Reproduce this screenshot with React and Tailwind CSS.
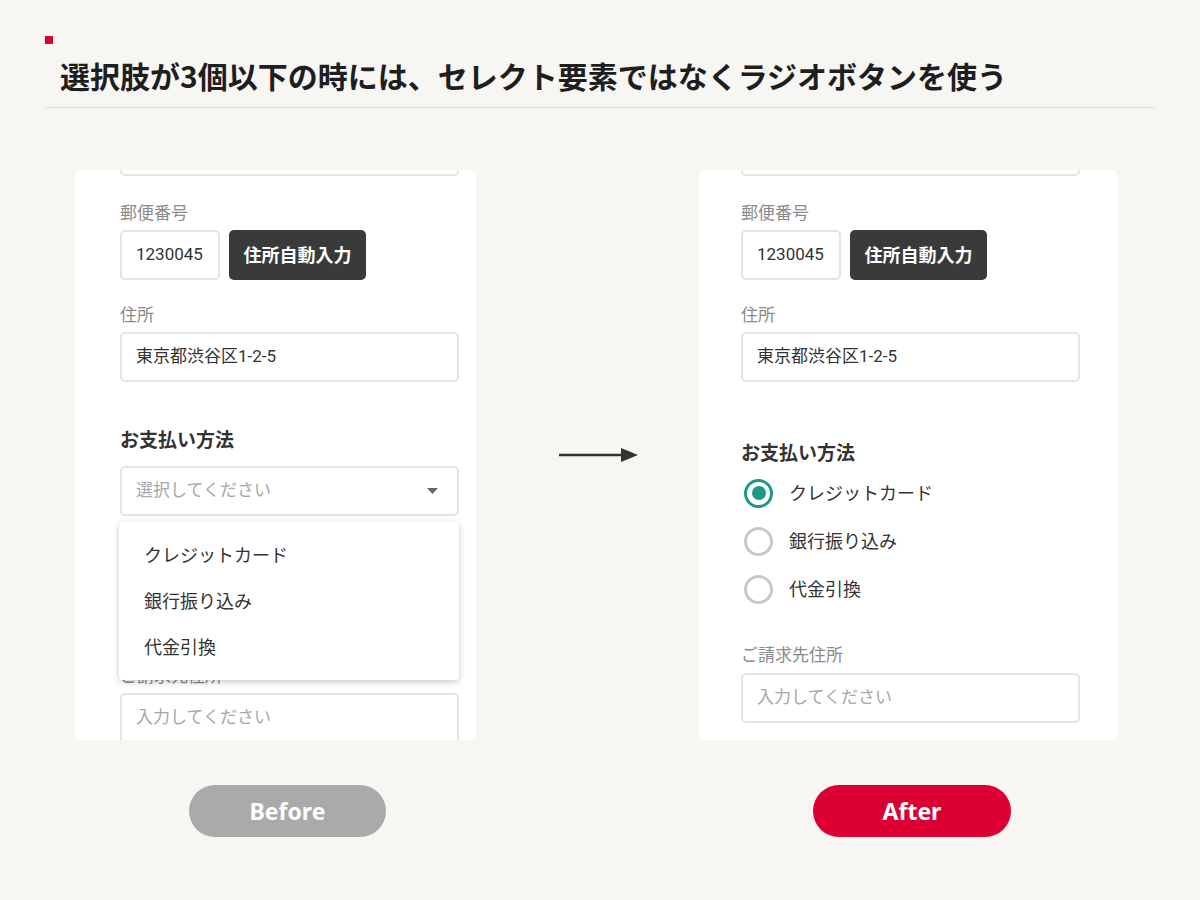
import { useState } from 'react'

const ja = { fontFamily: 'Roboto, "Noto Sans CJK JP", sans-serif' }

function Label({ children, className = '' }) {
  return <p className={`text-[17px] leading-[24px] text-[#8a8a8a] ${className}`}>{children}</p>
}

function Field({ children, placeholder, className = '' }) {
  return (
    <div className={`h-[50px] border-2 border-[#e4e4e4] rounded-[5px] flex items-center px-[14px] text-[17px] ${placeholder ? 'text-[#a8a8a8]' : 'text-[#333]'} ${className}`}>
      {children}
    </div>
  )
}

function Common() {
  return (
    <>
      <div className="h-[6px] border-2 border-t-0 border-[#e4e4e4] rounded-b-[5px]" />
      <Label className="mt-[25px]">郵便番号</Label>
      <div className="flex gap-[9px] mt-[5px]">
        <Field className="w-[100px]">1230045</Field>
        <button className="h-[50px] w-[137px] rounded-[5px] bg-[#3a3a3a] text-white font-bold text-[18px]">住所自動入力</button>
      </div>
      <Label className="mt-[23px]">住所</Label>
      <Field className="mt-[5px]">東京都渋谷区1-2-5</Field>
    </>
  )
}

function Radio({ checked, label, onClick }) {
  return (
    <div className="h-[48px] flex items-center cursor-pointer" onClick={onClick}>
      <span className={`w-[29px] h-[29px] rounded-full border-[3px] flex items-center justify-center ${checked ? 'border-[#1b9886]' : 'border-[#c8c8c8]'}`}>
        {checked && <span className="w-[14px] h-[14px] rounded-full bg-[#1b9886]" />}
      </span>
      <span className="ml-[16px] text-[18px] text-[#333]">{label}</span>
    </div>
  )
}

export default function App() {
  const [pay, setPay] = useState(0)
  const options = ['クレジットカード', '銀行振り込み', '代金引換']

  return (
    <div className="min-h-screen bg-[#f7f6f2] px-[45px] pt-[36px]" style={ja}>
      <div className="w-[8px] h-[8px] bg-[#dc0032]" />
      <h1 className="ml-[15px] mt-[11px] text-[30px] leading-[40px] font-bold text-[#1e1e1e]" style={{ fontFamily: '"Noto Sans CJK JP", sans-serif' }}>
        選択肢が3個以下の時には、セレクト要素ではなくラジオボタンを使う
      </h1>
      <div className="mt-[12px] h-px w-[1110px] bg-[#dcdcdc]" />

      <div className="flex items-start pl-[30px] mt-[62px]">
        {/* before */}
        <div className="w-[401px]">
          <div className="h-[570px] bg-white rounded-[6px] overflow-hidden pl-[45px] pr-[17px]">
            <Common />
            <p className="mt-[46px] text-[19px] leading-[26px] font-bold text-[#333]">お支払い方法</p>
            <div className="relative mt-[12px]">
              <Field placeholder className="justify-between">
                <span>選択してください</span>
                <svg width="11" height="6" viewBox="0 0 11 6" className="mr-[5px]"><path d="M0 0h11L5.5 6z" fill="#666" /></svg>
              </Field>
              <div className="absolute left-[-1px] top-[56px] w-[340px] bg-white rounded-[4px] py-[10px] z-10 shadow-[0_2px_6px_rgba(0,0,0,0.22)]">
                {options.map((o) => (
                  <div key={o} className="h-[46px] flex items-center pl-[25px] text-[18px] text-[#333]">{o}</div>
                ))}
              </div>
            </div>
            <Label className="mt-[148px]">ご請求先住所</Label>
            <Field placeholder className="mt-[5px]">入力してください</Field>
          </div>
          <div className="ml-[114px] mt-[45px] w-[197px] h-[52px] rounded-full bg-[#aaaaaa] flex items-center justify-center text-white text-[23px] font-bold" style={{ fontFamily: '"Noto Sans", sans-serif' }}>
            Before
          </div>
        </div>

        {/* arrow */}
        <div className="w-[223px] flex justify-center pt-[275px] pl-[22px]">
          <svg width="80" height="20" viewBox="0 0 80 20">
            <path d="M0 10H64" stroke="#333" strokeWidth="2.5" />
            <path d="M62 3L79 10L62 17z" fill="#333" />
          </svg>
        </div>

        {/* after */}
        <div className="w-[419px]">
          <div className="h-[570px] bg-white rounded-[6px] overflow-hidden pl-[42px] pr-[38px]">
            <Common />
            <p className="mt-[59px] text-[19px] leading-[26px] font-bold text-[#333]">お支払い方法</p>
            <div className="mt-[2px] pl-[3px]">
              {options.map((o, i) => (
                <Radio key={o} label={o} checked={pay === i} onClick={() => setPay(i)} />
              ))}
            </div>
            <Label className="mt-[30px]">ご請求先住所</Label>
            <Field placeholder className="mt-[6px]">入力してください</Field>
          </div>
          <div className="ml-[114px] mt-[45px] w-[198px] h-[52px] rounded-full bg-[#dc0032] flex items-center justify-center text-white text-[23px] font-bold" style={{ fontFamily: '"Noto Sans", sans-serif' }}>
            After
          </div>
        </div>
      </div>
    </div>
  )
}
